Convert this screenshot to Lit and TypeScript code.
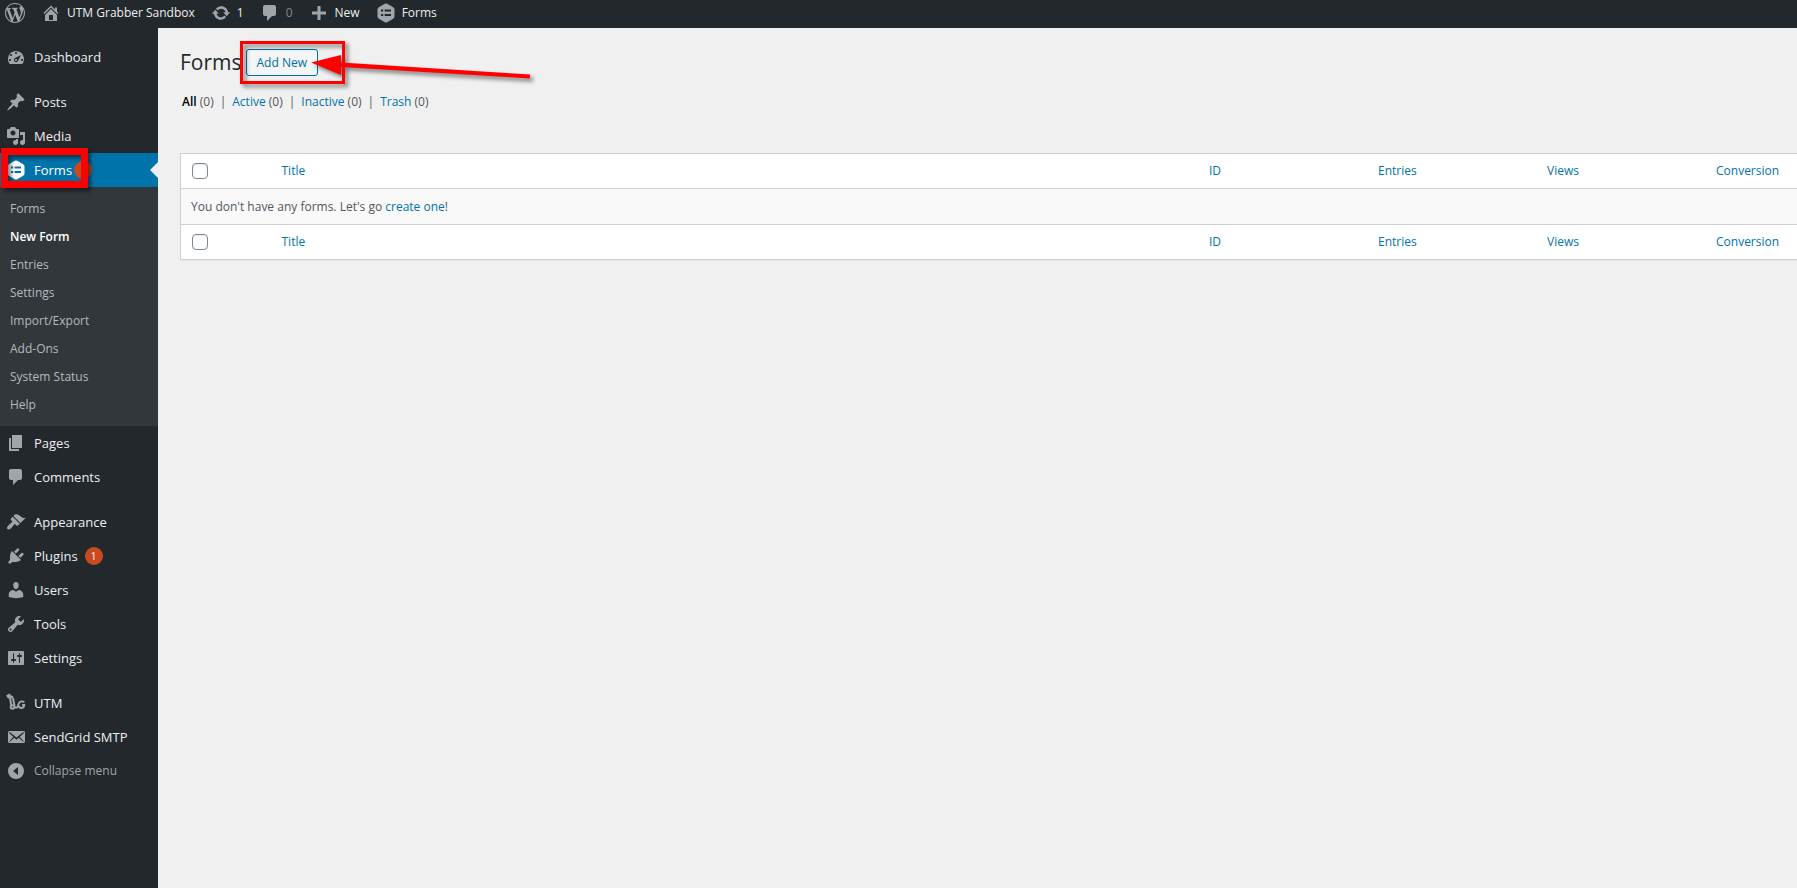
import { LitElement, html, css, svg, nothing } from "lit";
import { customElement } from "lit/decorators.js";

const icons: Record<string, string> = {
  wordpress: "M20 10c0-5.51-4.49-10-10-10C4.48 0 0 4.49 0 10c0 5.52 4.48 10 10 10 5.51 0 10-4.48 10-10zM7.78 15.37L4.37 6.22c.55-.02 1.17-.08 1.17-.08.5-.06.44-1.13-.06-1.11 0 0-1.45.11-2.37.11-.18 0-.37 0-.58-.01C4.12 2.69 6.87 1.11 10 1.11c2.33 0 4.45.87 6.05 2.34-.68-.11-1.65.39-1.65 1.58 0 .74.45 1.36.9 2.1.35.61.55 1.36.55 2.46 0 1.49-1.4 5-1.4 5l-3.03-8.37c.54-.02.82-.17.82-.17.5-.05.44-1.25-.06-1.22 0 0-1.44.12-2.38.12-.87 0-2.33-.12-2.33-.12-.5-.03-.56 1.2-.06 1.22l.92.08 1.26 3.41zM17.41 10c.24-.64.74-1.87.43-4.25.7 1.29 1.05 2.71 1.05 4.25 0 3.29-1.73 6.24-4.4 7.78.97-2.59 1.94-5.2 2.92-7.78zM6.1 18.09C3.12 16.65 1.11 13.53 1.11 10c0-1.3.23-2.48.72-3.59C3.25 10.3 4.67 14.2 6.1 18.09zm4.03-6.63l2.58 6.98c-.86.29-1.76.45-2.71.45-.79 0-1.57-.11-2.29-.33.81-2.38 1.62-4.74 2.42-7.1z",
  home: "M16 8.5l1.53 1.53-1.06 1.06L10 4.6l-6.47 6.49-1.06-1.06L10 2.5l4 4v-2h2v4zm-6-2.46l6 5.99V18H4v-5.97zM12 17v-5H8v5h4z",
  update: "M10.2 3.28c3.53 0 6.43 2.61 6.92 6h2.08l-3.5 4-3.5-4h2.32c-.45-1.97-2.21-3.45-4.32-3.45-1.45 0-2.73.71-3.54 1.78L4.95 5.66C6.23 4.2 8.11 3.28 10.2 3.28zm-.4 13.44c-3.52 0-6.43-2.61-6.92-6H.8l3.5-4c1.17 1.33 2.33 2.67 3.5 4H5.48c.45 1.97 2.21 3.45 4.32 3.45 1.45 0 2.73-.71 3.54-1.78l1.71 1.95c-1.28 1.46-3.15 2.38-5.25 2.38z",
  comment: "M5 2h9c1.1 0 2 .9 2 2v7c0 1.1-.9 2-2 2h-2l-5 5v-5H5c-1.1 0-2-.9-2-2V4c0-1.1.9-2 2-2z",
  plus: "M17 8.5v3h-5.500v5.500h-3v-5.500H3v-3h5.500V3h3v5.500z",
  forms: "M8.800.8q1.200-.7 2.400 0l6 3.400q1.300.8 1.300 2.200v7.200q0 1.400-1.300 2.200l-6 3.400q-1.200.7-2.400 0l-6-3.400q-1.300-.8-1.300-2.200V6.400q0-1.400 1.300-2.200zM5 6.500v2h2.200v-2zm3.600 0v2H15v-2zM5 11v2h2.200v-2zm3.600 0v2H15v-2z",
  dashboard: "M3.76 17.01h12.48C17.34 15.63 18 13.9 18 12c0-4.41-3.58-8-8-8s-8 3.59-8 8c0 1.9.66 3.63 1.76 5.01zM9 6c0-.55.45-1 1-1s1 .45 1 1c0 .56-.45 1-1 1s-1-.44-1-1zM4 8c0-.55.45-1 1-1s1 .45 1 1c0 .56-.45 1-1 1s-1-.44-1-1zm4.52 3.4c.84-.83 6.51-3.5 6.51-3.5s-2.66 5.68-3.49 6.51c-.84.84-2.18.84-3.02 0-.83-.83-.83-2.18 0-3.01zM3 13c0-.55.45-1 1-1s1 .45 1 1c0 .56-.45 1-1 1s-1-.44-1-1zm6 0c0 .56.45 1 1 1s1-.44 1-1c0-.55-.45-1-1-1s-1 .45-1 1zm6 0c0-.55.45-1 1-1s1 .45 1 1c0 .56-.45 1-1 1s-1-.44-1-1z",
  pin: "M10.44 3.02l1.82-1.82 6.36 6.35-1.83 1.82c-1.05-.68-2.48-.57-3.41.36l-.75.75c-.92.93-1.04 2.35-.35 3.41l-1.83 1.82-2.41-2.41-2.8 2.79c-.42.42-3.38 2.71-3.8 2.29s1.86-3.39 2.28-3.81l2.79-2.79L4.1 9.36l1.83-1.82c1.05.69 2.48.57 3.4-.36l.75-.75c.93-.92 1.05-2.35.36-3.41z",
  media: "M13 11V4c0-.55-.45-1-1-1h-1.670L9 1H5L3.670 3H2c-.55 0-1 .45-1 1v7c0 .55.45 1 1 1h10c.55 0 1-.45 1-1zM7 4.500c1.380 0 2.500 1.120 2.500 2.500S8.380 9.500 7 9.500 4.500 8.380 4.500 7 5.620 4.500 7 4.500zM14 6h5v10.500c0 1.380-1.120 2.500-2.500 2.500S14 17.880 14 16.500s1.120-2.500 2.500-2.500c.17 0 .34.02.5.05V9h-3V6zm-4 8.050V13h2v3.500c0 1.380-1.120 2.500-2.500 2.500S7 17.880 7 16.500 8.120 14 9.500 14c.17 0 .34.02.5.05z",
  pages: "M6 15V2h10v13H6zm-1 1h8v2H3V5h2v11z",
  appearance: "M14.48 11.06L7.41 3.99l1.5-1.5c.5-.56 2.3-.47 3.51.32 1.21.8 1.43 1.28 2.91 2.1 1.18.64 2.45 1.26 4.45.85zm-.71.71L6.7 4.7 4.93 6.47c-.39.39-.39 1.02 0 1.41l1.06 1.06c.39.39.39 1.03 0 1.42-.6.6-1.43 1.11-2.21 1.69-.35.26-.7.53-1.01.84C1.43 14.23.4 16.08 1.4 17.07c.99 1 2.84-.03 4.18-1.36.31-.31.58-.66.85-1.02.57-.78 1.08-1.61 1.69-2.21.39-.39 1.02-.39 1.41 0l1.06 1.06c.39.39 1.02.39 1.41 0z",
  plugins: "M13.11 4.36L9.87 7.6 8 5.73l3.24-3.24c.35-.34 1.05-.2 1.56.32.52.51.66 1.21.31 1.55zm-8 1.77l.91-1.12 9.01 9.01-1.19.84c-.71.71-2.63 1.16-3.82 1.16H6.14L4.9 17.26c-.59.59-1.54.59-2.12 0-.59-.58-.59-1.53 0-2.12l1.24-1.24v-3.88c0-1.13.4-3.19 1.09-3.89zm7.26 3.97l3.24-3.24c.34-.35 1.04-.21 1.55.31.52.51.66 1.21.31 1.55l-3.24 3.25z",
  users: "M10 9.25c-2.27 0-2.73-3.44-2.73-3.44C7 4.02 7.82 2 9.97 2c2.16 0 2.98 2.02 2.71 3.81 0 0-.41 3.44-2.68 3.44zm0 2.57L12.72 10c2.39 0 4.52 2.33 4.52 4.53v2.49s-3.65 1.13-7.24 1.13c-3.65 0-7.24-1.13-7.24-1.13v-2.49c0-2.25 1.94-4.48 4.47-4.48z",
  tools: "M16.68 9.77c-1.34 1.34-3.3 1.67-4.95.99l-5.41 6.52c-.99.99-2.59.99-3.58 0s-.99-2.59 0-3.57l6.52-5.42c-.68-1.65-.35-3.61.99-4.95 1.28-1.28 3.12-1.62 4.72-1.06l-2.89 2.89 2.82 2.82 2.86-2.87c.53 1.58.18 3.39-1.08 4.65zM3.81 16.21c.4.39 1.04.39 1.43 0 .4-.4.4-1.04 0-1.43-.39-.4-1.03-.4-1.43 0-.39.39-.39 1.03 0 1.43z",
  settings: "M18 16V4c0-.55-.45-1-1-1H3c-.55 0-1 .45-1 1v12c0 .55.45 1 1 1h14c.55 0 1-.45 1-1zM8 11h1c.55 0 1 .45 1 1s-.45 1-1 1H8v1.5c0 .28-.22.5-.5.5s-.5-.22-.5-.5V13H6c-.55 0-1-.45-1-1s.45-1 1-1h1V5.5c0-.28.22-.5.5-.5s.5.22.5.5V11zm5-2h-1c-.55 0-1-.45-1-1s.45-1 1-1h1V5.5c0-.28.22-.5.5-.5s.5.22.5.5V7h1c.55 0 1 .45 1 1s-.45 1-1 1h-1v5.5c0 .28-.22.5-.5.5s-.5-.22-.5-.5V9z",
  email: "M19 14.5v-9c0-.83-.67-1.5-1.5-1.500H3.490c-.83 0-1.500.67-1.500 1.500v9c0 .83.67 1.500 1.500 1.500H17.500c.83 0 1.500-.67 1.500-1.500zm-1.310-9.110c.33.33.15.67-.03.84L13.600 9.950l3.900 4.060c.12.14.2.36.06.51-.13.16-.43.15-.56.05l-4.370-3.730-2.140 1.950-2.130-1.950-4.370 3.730c-.13.1-.43.11-.56-.05-.14-.15-.06-.37.06-.51l3.900-4.060-4.060-3.720c-.18-.17-.36-.51-.03-.84s.67-.17.950.07l6.240 5.040 6.250-5.040c.28-.24.62-.4.950-.07z",
  collapse: "M10 2a8 8 0 1 0 0 16 8 8 0 0 0 0-16zM12 6v8l-5-4z",
};

const wound = new Set(["update", "media"]);

const icon = (name: string) => html`<svg class="icon" viewBox="0 0 20 20" aria-hidden="true">
  ${name === "utm"
    ? svg`<path d="M0 2.500L3.500.5 5 2.200 7.500 3.500 6.500 5.500 4 5 2 5.500z"></path>
        <path class="line" d="M4 4.500L5.200 12"></path>
        <path class="line" d="M7 5L8.500 13"></path>
        <circle class="line" cx="6.500" cy="14" r="1.800"></circle>
        <path class="line" d="M8.500 14.500h2.500c1 0 1-4 3-5.500 1.500-1 3.500-.5 4.200.5M16 12h2.200c0 3.500-4.800 4-5.200 1"></path>`
    : svg`<path fill-rule=${wound.has(name) ? "nonzero" : "evenodd"} d=${icons[name]}></path>`}
</svg>`;

const menu: { name: string; icon: string; badge?: string; sub?: string[] }[][] = [
  [{ name: "Dashboard", icon: "dashboard" }],
  [
    { name: "Posts", icon: "pin" },
    { name: "Media", icon: "media" },
    {
      name: "Forms", icon: "forms", badge: "1",
      sub: ["Forms", "New Form", "Entries", "Settings", "Import/Export", "Add-Ons", "System Status", "Help"],
    },
    { name: "Pages", icon: "pages" },
    { name: "Comments", icon: "comment" },
  ],
  [
    { name: "Appearance", icon: "appearance" },
    { name: "Plugins", icon: "plugins", badge: "1" },
    { name: "Users", icon: "users" },
    { name: "Tools", icon: "tools" },
    { name: "Settings", icon: "settings" },
  ],
  [
    { name: "UTM", icon: "utm" },
    { name: "SendGrid SMTP", icon: "email" },
  ],
];

@customElement("app-root")
export class AppRoot extends LitElement {
  static styles = css`
    :host {
      display: flex;
      flex-direction: column;
      min-height: 100vh;
      background: #f0f0f0;
      color: #50575e;
      font: 12px/18px "Open Sans", "Noto Sans", sans-serif;
    }
    * { box-sizing: border-box; }
    a { color: #0073aa; text-decoration: none; }
    .icon { width: 20px; height: 20px; flex: none; fill: #a0a5aa; display: block; }
    .icon .line { fill: none; stroke: #a0a5aa; stroke-width: 2; }

    .bar {
      display: flex;
      align-items: center;
      gap: 16px;
      height: 28px;
      padding: 0 5px 3px;
      background: #23282d;
    }
    .bar a { display: flex; align-items: center; gap: 6px; color: #eee; }
    .bar .dim { color: #82878c; }

    .body { flex: 1; display: flex; }
    .side { width: 158px; flex: none; background: #23282d; padding-top: 12px; }
    .side ul { list-style: none; margin: 0; padding: 0; }
    .side .group + .group { margin-top: 11px; }
    .item {
      position: relative;
      display: flex;
      align-items: center;
      gap: 8px;
      width: 100%;
      height: 34px;
      padding: 0 6px;
      border: 0;
      background: none;
      color: #eee;
      font: inherit;
      font-size: 13px;
      text-align: left;
    }
    .item.current { background: #0073aa; color: #fff; }
    .item.current .icon { fill: #fff; }
    .item.current::after {
      content: "";
      position: absolute;
      right: 0;
      top: 9px;
      border: 8px solid transparent;
      border-right-color: #f0f0f0;
      border-left-width: 0;
    }
    .item.collapse { color: #a0a5aa; font-size: 12px; }
    .badge {
      width: 18px;
      height: 18px;
      margin-left: -1px;
      border-radius: 9px;
      background: #ca4a1f;
      color: #fff;
      font-size: 10px;
      text-align: center;
    }
    .current .badge { margin-left: -6px; }
    .side .sub { background: #32373c; padding: 8px 0 7px; }
    .sub a { display: block; padding: 5px 10px; color: #b4b9be; }
    .sub a.on { color: #fff; font-weight: 600; }

    .main { flex: 1; min-width: 0; padding: 20px 0 0 22px; }
    .head { display: flex; align-items: center; gap: 4px; height: 29px; }
    h1 { margin: 0; font-size: 21px; line-height: 29px; font-weight: 400; color: #23282d; }
    .add {
      height: 27px;
      padding: 1px 10px 0;
      border: 1px solid #0071a1;
      border-radius: 3px;
      background: #f3f5f6;
      color: #0071a1;
      font: inherit;
    }
    .filters { display: flex; gap: 6px; list-style: none; margin: 16px 0 42px; padding: 0 0 0 2px; }
    .filters li + li::before { content: "|"; margin-right: 6px; }
    .filters .on { color: #000; font-weight: 600; }

    table {
      width: 100%;
      table-layout: fixed;
      border-collapse: collapse;
      background: #fff;
      border: 1px solid #ccd0d4;
      border-right: 0;
      box-shadow: 0 1px 1px rgba(0, 0, 0, 0.04);
    }
    th, td { height: 35px; padding: 0 10px; font-weight: 400; text-align: left; }
    thead tr { border-bottom: 1px solid #ccd0d4; }
    tfoot tr { border-top: 1px solid #ccd0d4; }
    tbody td { background: #f9f9f9; height: 36px; }
    .c-check { width: 91px; }
    .c-num { width: 169px; }
    .c-last { width: 91px; }
    input {
      appearance: none;
      display: block;
      width: 16px;
      height: 16px;
      margin: 0 0 0 1px;
      border: 1px solid #7e8993;
      border-radius: 4px;
      background: #fff;
      box-shadow: inset 0 1px 2px rgba(0, 0, 0, 0.1);
    }

    .mark {
      position: absolute;
      left: 0;
      top: 0;
      width: 560px;
      height: 200px;
      pointer-events: none;
      filter: drop-shadow(3px 3px 2px rgba(0, 0, 0, 0.5));
    }
  `;

  private headings(place: string) {
    return html`<tr>
      <th><input type="checkbox" aria-label="Select all forms, ${place}" /></th>
      ${["Title", "ID", "Entries", "Views", "Conversion"].map((t) => html`<th><a href="#">${t}</a></th>`)}
    </tr>`;
  }

  render() {
    return html`
      <nav class="bar" aria-label="Toolbar">
        <a href="#" aria-label="About WordPress">${icon("wordpress")}</a>
        <a href="#">${icon("home")}UTM Grabber Sandbox</a>
        <a href="#">${icon("update")}1</a>
        <a href="#" class="dim">${icon("comment")}0</a>
        <a href="#">${icon("plus")}New</a>
        <a href="#">${icon("forms")}Forms</a>
      </nav>
      <div class="body">
        <nav class="side" aria-label="Main menu">
          ${menu.map((group) => html`<ul class="group">
            ${group.map((m) => html`<li>
              <a href="#" class="item ${m.sub ? "current" : ""}">${icon(m.icon)}<span>${m.name}</span>
                ${m.badge ? html`<span class="badge">${m.badge}</span>` : nothing}</a>
              ${m.sub
                ? html`<ul class="sub">${m.sub.map((s) => html`<li><a href="#" class=${s === "New Form" ? "on" : ""}>${s}</a></li>`)}</ul>`
                : nothing}
            </li>`)}
          </ul>`)}
          <button class="item collapse" type="button">${icon("collapse")}<span>Collapse menu</span></button>
        </nav>
        <main class="main">
          <div class="head">
            <h1>Forms</h1>
            <button class="add" type="button">Add New</button>
          </div>
          <ul class="filters">
            <li><a href="#" class="on">All</a> (0)</li>
            <li><a href="#">Active</a> (0)</li>
            <li><a href="#">Inactive</a> (0)</li>
            <li><a href="#">Trash</a> (0)</li>
          </ul>
          <table>
            <colgroup>
              <col class="c-check" /><col /><col class="c-num" /><col class="c-num" /><col class="c-num" /><col class="c-last" />
            </colgroup>
            <thead>${this.headings("top")}</thead>
            <tbody><tr><td colspan="6">You don't have any forms. Let's go <a href="#">create one</a>!</td></tr></tbody>
            <tfoot>${this.headings("bottom")}</tfoot>
          </table>
        </main>
      </div>
      <svg class="mark" viewBox="0 0 560 200" aria-hidden="true">
        <rect x="4.500" y="151.500" width="80" height="33" fill="none" stroke="#f00" stroke-width="7"></rect>
        <rect x="241.500" y="42.500" width="102" height="40" fill="none" stroke="#f00" stroke-width="3"></rect>
        <path fill="#f00" d="M311 62.500L341 55v7.500L530 74.500v4L341 67v8z"></path>
      </svg>
    `;
  }
}
